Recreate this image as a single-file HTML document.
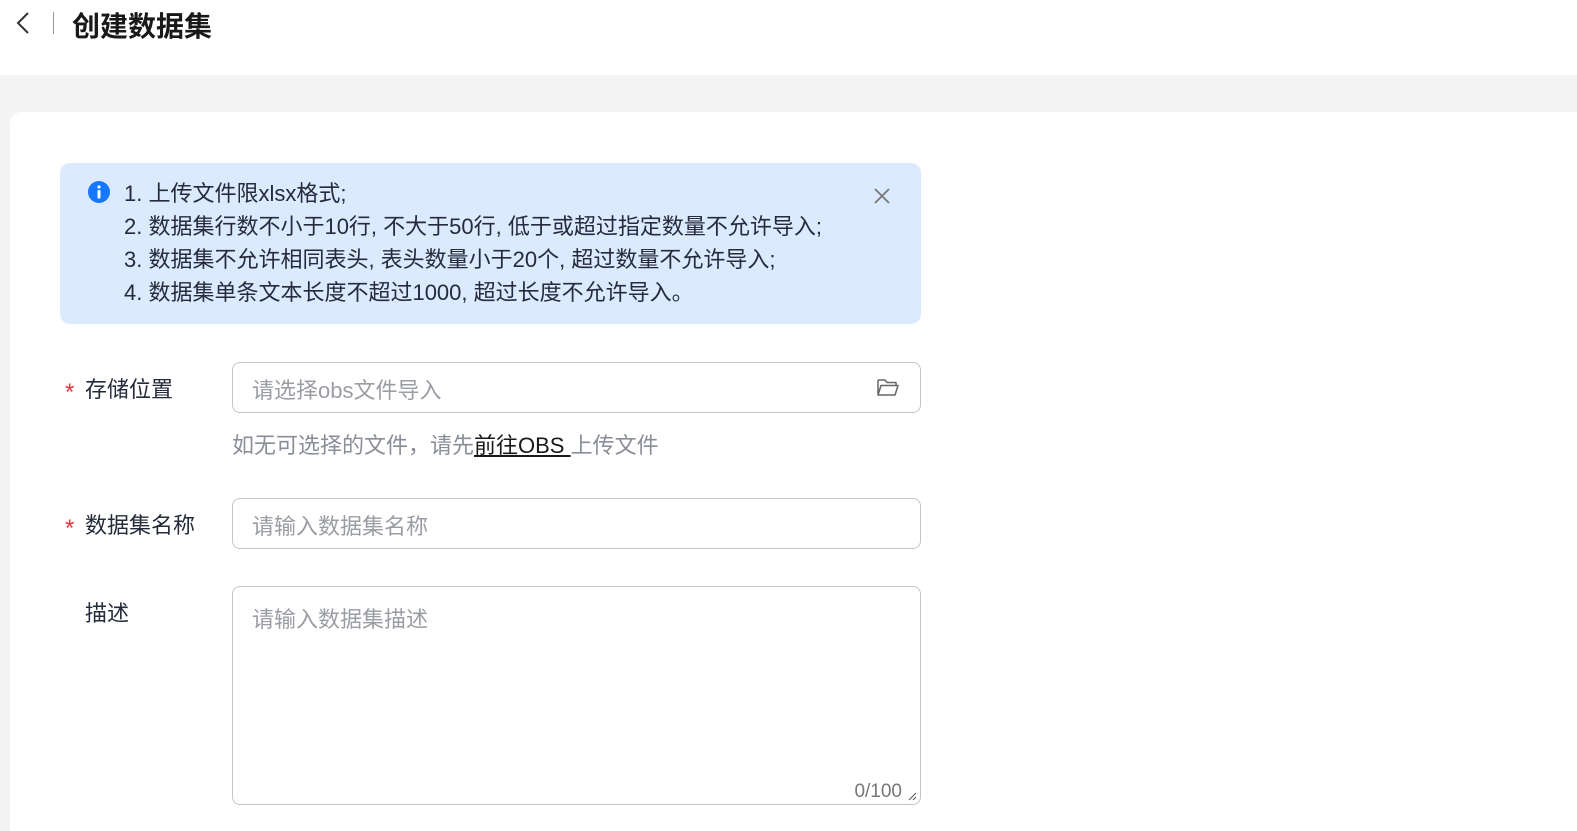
<!DOCTYPE html>
<html><head><meta charset="utf-8"><style>
*{margin:0;padding:0;box-sizing:border-box}
html,body{width:1577px;height:831px;overflow:hidden}
body{background:#f4f4f4;font-family:"Liberation Sans","Noto Sans CJK SC",sans-serif;color:#252b3a;position:relative}
.hdr{position:absolute;left:0;top:0;width:1577px;height:75px;background:#fff}
.title{position:absolute;left:72px;top:5px;font-size:28px;font-weight:bold;color:#191919}
.sep{position:absolute;left:53px;top:12px;width:1px;height:22px;background:#999}
.card{position:absolute;left:10px;top:112px;width:1567px;height:719px;background:#fff;border-radius:12px 0 0 0}
.alert{position:absolute;left:60px;top:163px;width:861px;height:161px;background:#dbeafe;border-radius:10px}
.alert .t{position:absolute;left:64px;top:14px;font-size:22px;line-height:33px;color:#252b3a}
.lbl{position:absolute;left:85px;font-size:22px;color:#252b3a}
.star{position:absolute;left:65px;color:#e5343a;font-size:24px}
.inp{position:absolute;left:232px;width:689px;border:1px solid #c2c4c8;border-radius:8px;background:#fff}
.ph{position:absolute;left:19px;font-size:22px;color:#9a9da3}
.hint{position:absolute;left:232px;top:428px;font-size:22px;color:#8a8e99}
.hint u{color:#191919}
</style></head><body>
<div class="hdr">
<svg style="position:absolute;left:14px;top:11px" width="18" height="24" viewBox="0 0 18 24"><path d="M14 2 L4 12 L14 22" fill="none" stroke="#333" stroke-width="2"/></svg>
<div class="sep"></div>
<div class="title">创建数据集</div>
</div>
<div class="card"></div>
<div class="alert">
<svg style="position:absolute;left:28px;top:18px" width="22" height="22" viewBox="0 0 22 22"><circle cx="11" cy="11" r="11" fill="#1677ff"/><circle cx="11" cy="6" r="1.6" fill="#fff"/><rect x="9.5" y="9" width="3" height="8.5" rx="1" fill="#fff"/></svg>
<div class="t">1. 上传文件限xlsx格式;<br>2. 数据集行数不小于10行, 不大于50行, 低于或超过指定数量不允许导入;<br>3. 数据集不允许相同表头, 表头数量小于20个, 超过数量不允许导入;<br>4. 数据集单条文本长度不超过1000, 超过长度不允许导入。</div>
<svg style="position:absolute;left:813px;top:24px" width="18" height="18" viewBox="0 0 18 18"><path d="M2 2L16 16M16 2L2 16" stroke="#777" stroke-width="1.8"/></svg>
</div>
<div class="star" style="top:379px">*</div><div class="lbl" style="top:372px">存储位置</div>
<div class="inp" style="top:362px;height:51px"><div class="ph" style="top:10px">请选择obs文件导入</div>
<svg style="position:absolute;left:643px;top:14px" width="24" height="22" viewBox="0 0 24 22"><path d="M2 3h7l2 2.5h9v3M2 3v15h17l3-9.5H5L2 18" fill="none" stroke="#666" stroke-width="1.5" stroke-linejoin="round"/></svg></div>
<div class="hint">如无可选择的文件，请先<u>前往OBS </u>上传文件</div>
<div class="star" style="top:515px">*</div><div class="lbl" style="top:508px">数据集名称</div>
<div class="inp" style="top:498px;height:51px"><div class="ph" style="top:10px">请输入数据集名称</div></div>
<div class="lbl" style="top:596px">描述</div>
<div class="inp" style="top:586px;height:219px"><div class="ph" style="top:15px">请输入数据集描述</div>
<div style="position:absolute;right:18px;bottom:1px;font-size:19px;color:#777">0/100</div>
<svg style="position:absolute;right:3px;bottom:3px" width="10" height="10" viewBox="0 0 10 10"><path d="M9 2L2 9M9 6L6 9" stroke="#555" stroke-width="1"/></svg></div>
</body></html>
